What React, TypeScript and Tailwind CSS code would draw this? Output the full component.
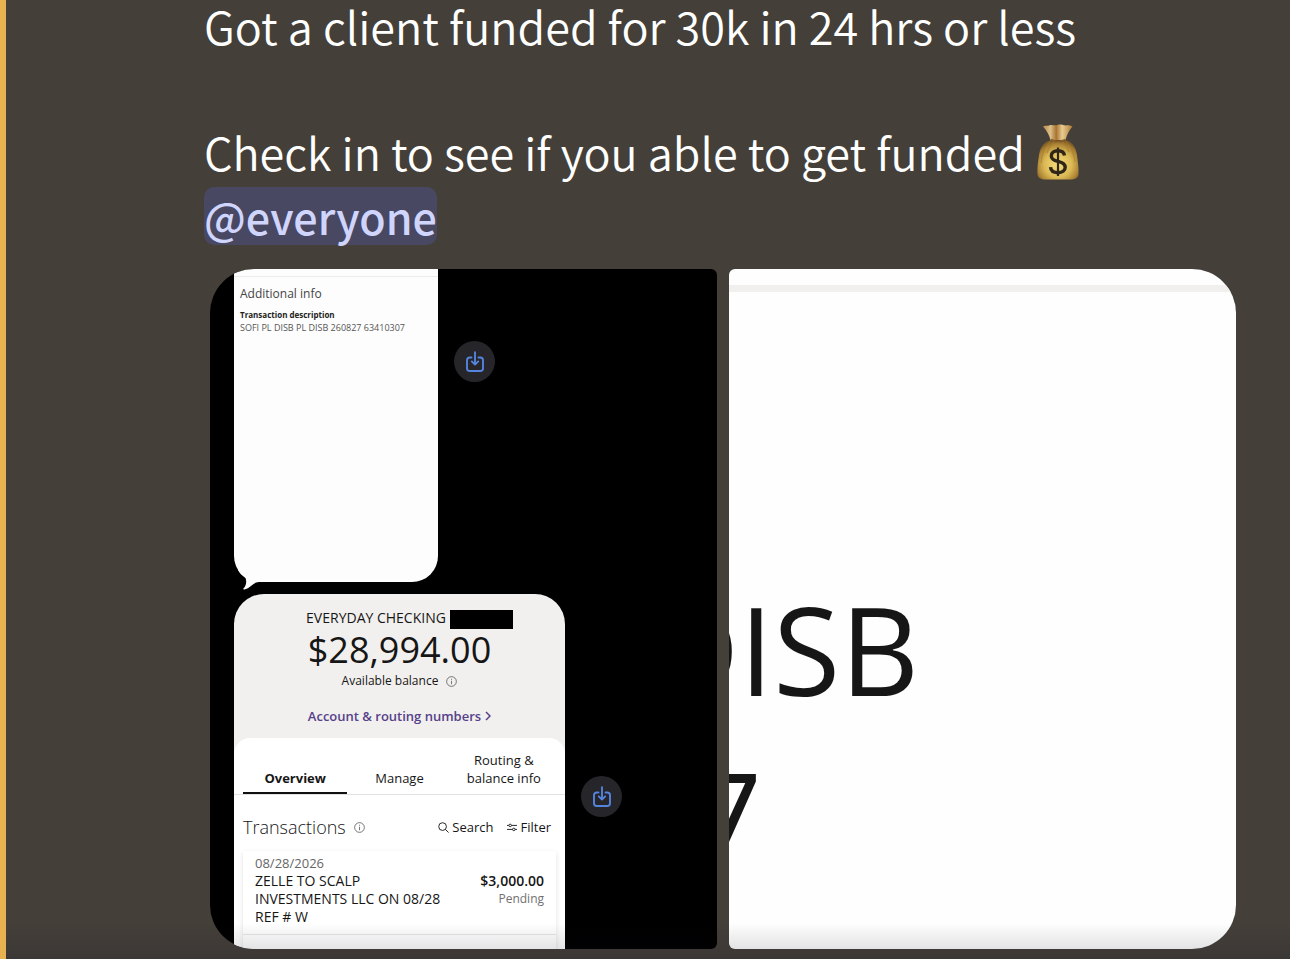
import type { ReactNode } from "react";

function MoneyBag() {
  return (
    <svg viewBox="0 0 42 56" className="ml-3 h-14 w-[42px] shrink-0" role="img" aria-label="money bag">
      <defs>
        <radialGradient id="bag" cx="0.5" cy="0.62" r="0.6">
          <stop offset="0" stopColor="#f4dd7c" />
          <stop offset="0.55" stopColor="#dcba56" />
          <stop offset="0.85" stopColor="#ad8535" />
          <stop offset="1" stopColor="#805e28" />
        </radialGradient>
        <linearGradient id="neck" x1="0" x2="1" y1="0" y2="0">
          <stop offset="0" stopColor="#b98a45" />
          <stop offset="0.25" stopColor="#dcc08a" />
          <stop offset="0.45" stopColor="#a87330" />
          <stop offset="0.65" stopColor="#e6cb92" />
          <stop offset="1" stopColor="#b07a34" />
        </linearGradient>
      </defs>
      <path d="M6 2.600C8 .8 10 2.400 12 1.400C15 0 19 2 21 .8C24 -.2 26 1 29 1.400C31 .8 33 1.200 35.500 2.600C31.500 7 30 11 28.500 16H13.500C12 11 10 7 6 2.600Z" fill="url(#neck)" />
      <path d="M14 16C18 18 25 18 28.500 16C35 18 39 23 40 31C41 39 42 46 41.500 50C41.500 54 38 55.500 33 55.500H9C4 55.500 .5 54 .5 50C0 45 1 38 2 31C3 23 7 18 14 16Z" fill="url(#bag)" />
      <path d="M13 18C8 22 5 29 4 39M17 18C13 22 11 25 10 29M29 18C34 22 37 29 38 38M25 18C29 21 31 24 32 28" fill="none" stroke="#a97b2b" strokeWidth="1.200" opacity="0.6" />
      <path d="M14 15.500C18 17.500 24 17.500 28.500 15.500" fill="none" stroke="#8d5f25" strokeWidth="1.600" />
      <path d="M27.500 31.500C27 28.300 24.600 26.800 21 26.800C17 26.800 14.300 28.800 14.300 31.900C14.300 35 16.600 36.300 21 37.400C25.800 38.500 28.200 40 28.200 43.300C28.200 46.600 25.300 48.700 21 48.700C16.600 48.700 13.800 46.700 13.500 43.200" fill="none" stroke="#2f2618" strokeWidth="3.400" />
      <path d="M21 23.500V52" stroke="#2f2618" strokeWidth="2.200" />
    </svg>
  );
}

function InfoIcon() {
  return (
    <svg viewBox="0 0 12 12" className="size-[11px] shrink-0" fill="none" stroke="#5c5c5c" strokeWidth="0.9" aria-hidden="true">
      <circle cx="6" cy="6" r="5.300" />
      <path d="M6 5.200V9M6 3V4.100" />
    </svg>
  );
}

function SaveButton({ className }: { className: string }) {
  return (
    <button
      type="button"
      aria-label="Save image"
      className={`flex size-[41px] shrink-0 items-center justify-center rounded-full bg-[#26252a] ${className}`}
    >
      <svg viewBox="0 0 20 22" className="h-[22px] w-5" fill="none" stroke="#5484dc" strokeWidth="1.900" strokeLinecap="round" strokeLinejoin="round" aria-hidden="true">
        <path d="M6.500 6.500H4.800C3 6.500 2 7.500 2 9.300V17.200C2 19 3 20 4.800 20H15.200C17 20 18 19 18 17.200V9.300C18 7.500 17 6.500 15.200 6.500H13.500" />
        <path d="M10 1.300V13.500M6.800 10.400L10 13.600L13.200 10.400" />
      </svg>
    </button>
  );
}

function DescriptionBubble() {
  return (
    <div className="relative h-[313px] w-[204px] shrink-0 rounded-b-[26px] bg-[#fdfdfd] px-1.5 text-[#222]">
      <div className="-mx-1.5 h-2 border-b border-[#ececec]" />
      <h2 className="mt-2 text-xs leading-[18px] text-[#444]">Additional info</h2>
      <h3 className="mt-1.5 text-[8px] leading-3 font-bold">Transaction description</h3>
      <p className="text-[9px] leading-[14px] text-[#555]">SOFI PL DISB PL DISB 260827 63410307</p>
      <svg viewBox="0 0 28 20" className="absolute -bottom-2 left-0 h-5 w-7" fill="#fdfdfd" aria-hidden="true">
        <path d="M4 0C5.500 3 8 5.500 11.500 8C13 12 12 16 9 19C10 20 13 19 15 17.500C18 15.500 20 12.500 25 12L28 0Z" />
      </svg>
    </div>
  );
}

function Tab({ active, children }: { active?: boolean; children: ReactNode }) {
  return (
    <button
      type="button"
      role="tab"
      aria-selected={!!active}
      className={
        active
          ? "flex flex-1 items-end justify-center border-b-2 border-[#111] pb-[5px] text-[13px] leading-[18px] font-bold"
          : "flex flex-1 items-end justify-center border-b-2 border-transparent pb-[5px] text-[13px] leading-[18px] font-medium"
      }
    >
      {children}
    </button>
  );
}

function AccountBubble() {
  return (
    <div className="w-[331px] shrink-0 overflow-hidden rounded-t-[30px] bg-[#f2f0ee] text-[#161616]">
      <header className="flex h-36 flex-col items-center pt-3">
        <div className="flex items-center gap-1 pl-5">
          <h2 className="text-sm leading-5">EVERYDAY CHECKING</h2>
          <span className="mt-1 h-[19px] w-[63px] bg-black" />
        </div>
        <p className="text-4xl leading-[42px]">$28,994.00</p>
        <p className="flex items-center gap-2 text-xs leading-5">
          Available balance <InfoIcon />
        </p>
        <a href="#routing" className="mt-4 flex items-center gap-1 text-[13px] leading-[18px] font-semibold text-[#55418a]">
          Account &amp; routing numbers
          <svg viewBox="0 0 6 10" className="h-2.5 w-1.5" fill="none" stroke="currentColor" strokeWidth="1.500" aria-hidden="true">
            <path d="M1 1L5 5L1 9" />
          </svg>
        </a>
      </header>
      <section className="rounded-t-[16px] bg-white">
        <div role="tablist" className="flex h-[57px] border-b border-[#e2e2e2] px-[9px]">
          <Tab active>Overview</Tab>
          <Tab>Manage</Tab>
          <Tab>
            <span>
              Routing &amp;
              <br />
              balance info
            </span>
          </Tab>
        </div>
        <div className="flex items-center pt-5 pr-3.5 pl-[9px]">
          <h3 className="text-lg leading-6 font-light">Transactions</h3>
          <span className="ml-2 flex flex-1 items-center">
            <InfoIcon />
          </span>
          <button type="button" className="flex items-center gap-[3px] text-[13px] leading-5 font-medium">
            <svg viewBox="0 0 12 12" className="size-[11px]" fill="none" stroke="currentColor" aria-hidden="true">
              <circle cx="5" cy="5" r="4.200" />
              <path d="M8 8L11.500 11.500" />
            </svg>
            Search
          </button>
          <button type="button" className="ml-3.5 flex items-center gap-[3px] text-[13px] leading-5 font-medium">
            <svg viewBox="0 0 11 9" className="h-[9px] w-2.5" fill="none" stroke="currentColor" aria-hidden="true">
              <path d="M0 2.200H2M5 2.200H11M0 6.600H6M9 6.600H11" />
              <circle cx="3.500" cy="2.200" r="1.400" />
              <circle cx="7.500" cy="6.600" r="1.400" />
            </svg>
            Filter
          </button>
        </div>
        <div className="mx-[9px] mt-3 h-32 shadow-[0_2px_5px_rgba(0,0,0,0.12)]">
          <article className="flex justify-between border-b border-[#e6e6e6] px-3 pt-[3px] pb-2 text-sm leading-[18px]">
            <div className="whitespace-nowrap">
              <time className="block text-[13px] leading-[18px] text-[#666]">08/28/2026</time>
              <p>
                ZELLE TO SCALP
                <br />
                INVESTMENTS LLC ON 08/28
                <br />
                REF # W
              </p>
            </div>
            <div className="pt-[18px] text-right">
              <p className="text-sm leading-[18px] font-semibold">$3,000.00</p>
              <p className="text-xs leading-[18px] text-[#707070]">Pending</p>
            </div>
          </article>
        </div>
      </section>
    </div>
  );
}

export default function App() {
  return (
    <main className="relative min-h-screen overflow-hidden border-l-6 border-[#e8b250] bg-[#443f39] pr-[54px] pb-2.5 pl-[198px] font-['Open_Sans',sans-serif]">
      <div className="-mt-1.5 font-['Noto_Sans_CJK_JP','Noto_Sans',sans-serif] text-[45px] leading-[63px] font-[350] text-white">
        <p>Got a client funded for 30k in 24 hrs or less</p>
        <br />
        <p className="flex items-center">
          Check in to see if you able to get funded <MoneyBag />
        </p>
        <p className="mt-1 flex">
          <a href="#everyone" className="rounded-[10px] bg-[#494862] text-[43px] leading-[58px] font-medium text-[#d0d5fd]">
            @everyone
          </a>
        </p>
      </div>
      <div className="mt-6 ml-1.5 grid grid-cols-2 gap-3">
        <figure className="aspect-[507/680] overflow-hidden rounded-[6px] rounded-l-[44px] bg-black pl-6">
          <div className="flex gap-4">
            <DescriptionBubble />
            <SaveButton className="mt-[72px]" />
          </div>
          <div className="mt-3 flex gap-4">
            <AccountBubble />
            <SaveButton className="mt-[182px]" />
          </div>
        </figure>
        <figure className="aspect-[507/680] overflow-hidden rounded-[6px] rounded-r-[44px] bg-[#fefefe] pt-4 text-[122px] leading-[166px] text-[#161616]">
          <div className="h-[7px] bg-[#f1f0ee]" />
          <p className="mt-[274px] flex w-[190px] justify-end">DISB</p>
          <p className="flex w-[33px] justify-end">7</p>
        </figure>
      </div>
      <div className="pointer-events-none absolute inset-x-0 bottom-0 h-9 bg-linear-to-b from-transparent to-[#10102028]" />
    </main>
  );
}
